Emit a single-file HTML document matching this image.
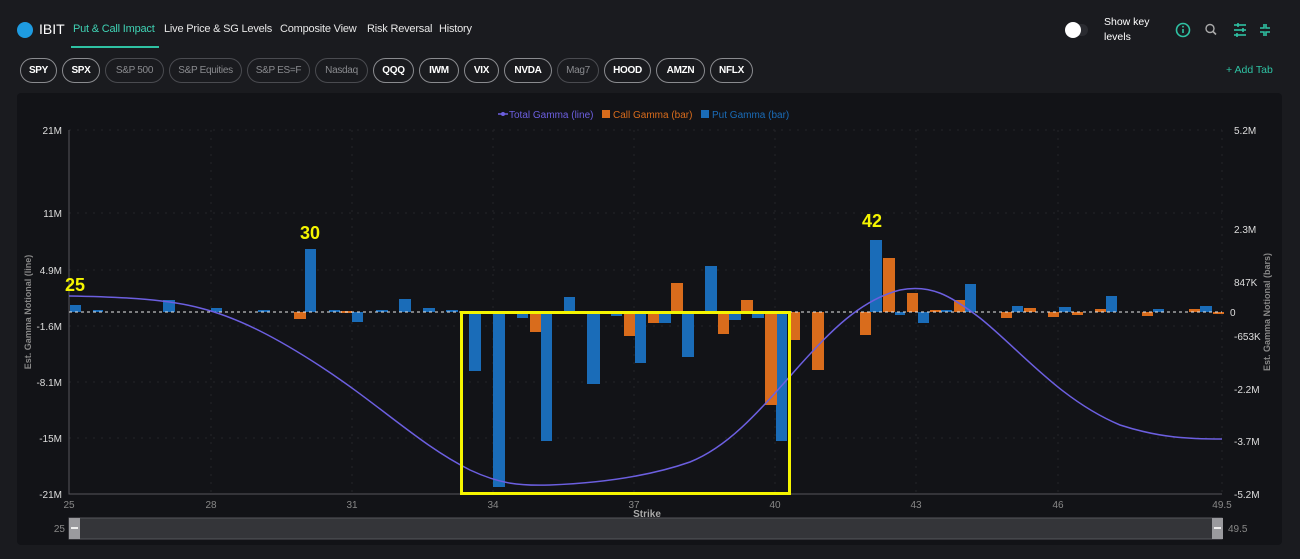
<!DOCTYPE html>
<html><head><meta charset="utf-8"><style>
*{margin:0;padding:0;box-sizing:border-box}
body{width:1300px;height:559px;background:#1a1b1f;font-family:"Liberation Sans",sans-serif;position:relative;overflow:hidden;color:#ddd}
.a{position:absolute;white-space:nowrap}
.tab{font-size:11px;color:#e6e6e6;top:23px;letter-spacing:-0.2px}
.pill{position:absolute;top:58px;height:25px;border:1px solid #8a8b8f;border-radius:13px;font-size:10px;color:#fff;line-height:23px;text-align:center;font-weight:bold;letter-spacing:-0.3px}
.pill.d{border-color:#4a4b50;color:#8a8b8f;font-weight:normal}
</style></head><body>
<div class="a" style="left:17px;top:22px;width:16px;height:16px;border-radius:50%;background:#1e9be0"></div>
<div class="a" style="left:39px;top:21px;font-size:14px;color:#fff">IBIT</div>
<div class="a tab" style="left:73px;color:#3fd1b3">Put &amp; Call Impact</div>
<div class="a" style="left:71px;top:46px;width:88px;height:2px;background:#2fc2a3"></div>
<div class="a tab" style="left:164px">Live Price &amp; SG Levels</div>
<div class="a tab" style="left:280px">Composite View</div>
<div class="a tab" style="left:367px">Risk Reversal</div>
<div class="a tab" style="left:439px">History</div>
<div class="a" style="left:1068px;top:24px;width:20px;height:12px;border-radius:6px;background:#2a2b30"></div>
<div class="a" style="left:1065px;top:22px;width:16px;height:16px;border-radius:50%;background:#fff"></div>
<div class="a" style="left:1104px;top:15px;font-size:10.5px;color:#fff;line-height:15px">Show key<br>levels</div>
<svg class="a" style="left:1170px;top:20px" width="120" height="20" viewBox="0 0 120 20">
<circle cx="13" cy="10" r="6.5" fill="none" stroke="#2fc2a3" stroke-width="1.6"/><line x1="13" y1="9" x2="13" y2="13" stroke="#2fc2a3" stroke-width="1.6"/><circle cx="13" cy="6.7" r="0.9" fill="#2fc2a3"/>
<circle cx="40" cy="8.5" r="4" fill="none" stroke="#aaa" stroke-width="1.4"/><line x1="43" y1="11.5" x2="46" y2="14.5" stroke="#aaa" stroke-width="1.6"/>
<g stroke="#2fc2a3" stroke-width="1.6"><line x1="64" y1="5" x2="76" y2="5"/><line x1="64" y1="10" x2="76" y2="10"/><line x1="64" y1="15" x2="76" y2="15"/><line x1="68" y1="3" x2="68" y2="7"/><line x1="73" y1="8" x2="73" y2="12"/><line x1="67" y1="13" x2="67" y2="17"/>
<path d="M94 4v4h-4M96 4v4h4M94 16v-4h-4M96 16v-4h4" fill="none"/></g>
</svg>
<div class="pill" style="left:20px;width:37px">SPY</div>
<div class="pill" style="left:62px;width:38px">SPX</div>
<div class="pill d" style="left:105px;width:59px">S&amp;P 500</div>
<div class="pill d" style="left:169px;width:73px">S&amp;P Equities</div>
<div class="pill d" style="left:247px;width:63px">S&amp;P ES=F</div>
<div class="pill d" style="left:315px;width:53px">Nasdaq</div>
<div class="pill" style="left:373px;width:41px">QQQ</div>
<div class="pill" style="left:419px;width:40px">IWM</div>
<div class="pill" style="left:464px;width:35px">VIX</div>
<div class="pill" style="left:504px;width:48px">NVDA</div>
<div class="pill d" style="left:557px;width:42px">Mag7</div>
<div class="pill" style="left:604px;width:47px">HOOD</div>
<div class="pill" style="left:656px;width:49px">AMZN</div>
<div class="pill" style="left:710px;width:43px">NFLX</div>
<div class="a" style="left:1226px;top:64px;font-size:10.5px;color:#2fc2a3">+ Add Tab</div>
<div class="a" style="left:17px;top:93px;width:1265px;height:452px;background:#121317;border-radius:4px"></div>
<svg class="a" style="left:0;top:0" width="1300" height="559" viewBox="0 0 1300 559" font-family="Liberation Sans, sans-serif">
<g font-size="10"><path d="M498 114h10" stroke="#6c5fe0" stroke-width="1.5"/><circle cx="503" cy="114" r="2" fill="#6c5fe0"/>
<text x="509" y="118" fill="#6c5fe0">Total Gamma (line)</text>
<rect x="602" y="110" width="8" height="8" fill="#d96c1c"/><text x="613" y="118" fill="#d96c1c">Call Gamma (bar)</text>
<rect x="701" y="110" width="8" height="8" fill="#1a6cb8"/><text x="712" y="118" fill="#1a6cb8">Put Gamma (bar)</text></g>
<g stroke="#24252a" stroke-dasharray="2 6" stroke-width="1">
<path d="M69 130H1222M69 213H1222M69 270H1222M69 326H1222M69 382H1222M69 438H1222"/>
<path d="M211 130V494M352 130V494M493 130V494M634 130V494M775 130V494M916 130V494M1058 130V494M1222 130V494"/></g>
<path d="M69 130V494H1222" stroke="#55565b" fill="none"/>
<g font-size="10" fill="#ddd" text-anchor="end">
<text x="62" y="134">21M</text><text x="62" y="217">11M</text><text x="62" y="274">4.9M</text><text x="62" y="330">-1.6M</text><text x="62" y="386">-8.1M</text><text x="62" y="442">-15M</text><text x="62" y="498">-21M</text></g>
<g font-size="10" fill="#ddd">
<text x="1234" y="134">5.2M</text><text x="1234" y="233">2.3M</text><text x="1234" y="286">847K</text><text x="1230" y="316">0</text><text x="1234" y="340">-653K</text><text x="1234" y="393">-2.2M</text><text x="1234" y="445">-3.7M</text><text x="1234" y="498">-5.2M</text></g>
<g font-size="10" fill="#888" text-anchor="middle">
<text x="69" y="508">25</text><text x="211" y="508">28</text><text x="352" y="508">31</text><text x="493" y="508">34</text><text x="634" y="508">37</text><text x="775" y="508">40</text><text x="916" y="508">43</text><text x="1058" y="508">46</text><text x="1222" y="508">49.5</text>
<text x="647" y="517" fill="#aaa" font-weight="bold">Strike</text></g>
<text transform="translate(31 312) rotate(-90)" font-size="9" fill="#888" text-anchor="middle" font-weight="bold">Est. Gamma Notional (line)</text>
<text transform="translate(1270 312) rotate(-90)" font-size="9" fill="#888" text-anchor="middle" font-weight="bold">Est. Gamma Notional (bars)</text>
<g fill="#1a6cb8">
<rect x="70" y="305" width="11" height="7"/><rect x="93" y="310" width="10" height="2"/><rect x="163" y="300" width="12" height="12"/><rect x="211" y="308" width="11" height="4"/><rect x="258" y="310" width="12" height="2"/>
<rect x="305" y="249" width="11" height="63"/><rect x="329" y="310" width="11" height="2"/><rect x="352" y="312" width="11" height="10"/><rect x="376" y="310" width="12" height="2"/><rect x="399" y="299" width="12" height="13"/><rect x="423" y="308" width="12" height="4"/><rect x="446" y="310" width="12" height="2"/>
<rect x="469" y="312" width="12" height="59"/><rect x="493" y="312" width="12" height="175"/><rect x="517" y="312" width="11" height="6"/><rect x="541" y="312" width="11" height="129"/><rect x="564" y="297" width="11" height="15"/><rect x="587" y="312" width="13" height="72"/><rect x="611" y="312" width="11" height="4"/><rect x="635" y="312" width="11" height="51"/><rect x="659" y="312" width="12" height="11"/><rect x="682" y="312" width="12" height="45"/><rect x="705" y="266" width="12" height="46"/><rect x="729" y="312" width="12" height="8"/><rect x="752" y="312" width="12" height="6"/><rect x="776" y="312" width="11" height="129"/>
<rect x="870" y="240" width="12" height="72"/><rect x="895" y="312" width="10" height="3"/><rect x="918" y="312" width="11" height="11"/><rect x="941" y="310" width="11" height="2"/><rect x="965" y="284" width="11" height="28"/><rect x="1012" y="306" width="11" height="6"/><rect x="1059" y="307" width="12" height="5"/><rect x="1106" y="296" width="11" height="16"/><rect x="1153" y="309" width="11" height="3"/><rect x="1200" y="306" width="12" height="6"/></g>
<g fill="#d96c1c">
<rect x="294" y="312" width="12" height="7"/><rect x="341" y="311" width="11" height="2"/>
<rect x="530" y="312" width="11" height="20"/><rect x="624" y="312" width="11" height="24"/><rect x="648" y="312" width="11" height="11"/><rect x="671" y="283" width="12" height="29"/><rect x="718" y="312" width="11" height="22"/><rect x="741" y="300" width="12" height="12"/><rect x="765" y="312" width="12" height="93"/><rect x="790" y="312" width="10" height="28"/><rect x="812" y="312" width="12" height="58"/>
<rect x="860" y="312" width="11" height="23"/><rect x="883" y="258" width="12" height="54"/><rect x="907" y="293" width="11" height="19"/><rect x="930" y="310" width="11" height="2"/><rect x="954" y="300" width="11" height="12"/><rect x="1001" y="312" width="11" height="6"/><rect x="1024" y="308" width="12" height="4"/><rect x="1048" y="312" width="11" height="5"/><rect x="1072" y="312" width="11" height="3"/><rect x="1095" y="309" width="11" height="3"/><rect x="1142" y="312" width="11" height="4"/><rect x="1189" y="309" width="11" height="3"/><rect x="1213" y="312" width="11" height="2"/></g>
<path d="M69 312H1222" stroke="#e8e8e8" stroke-dasharray="3 3" stroke-width="1"/>
<path d="M69 296C130 297 170 300 200 308C240 318 280 340 320 366C380 405 420 445 470 470C500 484 520 486 550 485C600 483 650 476 690 462C730 446 760 410 800 365C830 332 860 300 900 290C930 284 950 295 980 318C1020 350 1060 400 1120 425C1160 438 1190 439 1222 439" fill="none" stroke="#6c5fe0" stroke-width="1.5"/>
<rect x="461.5" y="312.5" width="328" height="181" fill="none" stroke="#f5f500" stroke-width="3"/>
<g font-size="18" font-weight="bold" fill="#f5f500"><text x="65" y="291">25</text><text x="300" y="239">30</text><text x="862" y="227">42</text></g>
<rect x="69" y="518" width="1153" height="21" fill="#343539" stroke="#55565b"/>
<rect x="69" y="518" width="11" height="21" fill="#9a9a9e"/><rect x="1212" y="518" width="11" height="21" fill="#9a9a9e"/>
<path d="M71 528h7M1214 528h7" stroke="#eee" stroke-width="2"/>
<text x="65" y="532" font-size="10" fill="#888" text-anchor="end">25</text><text x="1228" y="532" font-size="10" fill="#888">49.5</text>
</svg>
</body></html>
